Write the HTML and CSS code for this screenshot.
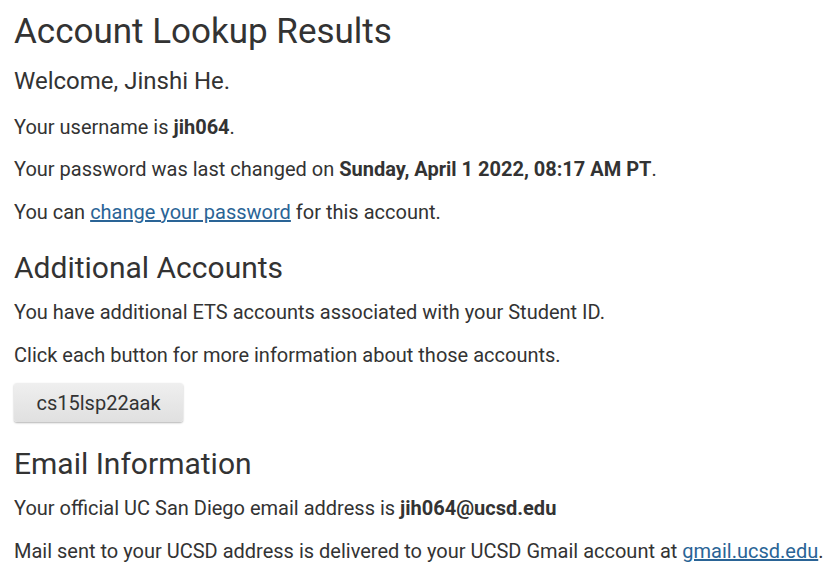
FILE: index.html
```html
<!DOCTYPE html>
<html>
<head>
<meta charset="utf-8">
<link rel="stylesheet" href="styles.css">
</head>
<body>
<div class="page">
  <h1 class="title">Account Lookup Results</h1>
  <p class="welcome">Welcome, Jinshi He.</p>
  <p class="text">Your username is <strong>jih064</strong>.</p>
  <p class="text">Your password was last changed on <strong>Sunday, April 1 2022, 08:17 AM PT</strong>.</p>
  <p class="text">You can <a class="link" href="#">change your password</a> for this account.</p>

  <h2 class="section">Additional Accounts</h2>
  <p class="text">You have additional ETS accounts associated with your Student ID.</p>
  <p class="text">Click each button for more information about those accounts.</p>
  <div class="buttons"><button class="btn">cs15lsp22aak</button></div>

  <h2 class="section">Email Information</h2>
  <p class="text">Your official UC San Diego email address is <strong>jih064@ucsd.edu</strong></p>
  <p class="text">Mail sent to your UCSD address is delivered to your UCSD Gmail account at <a class="link" href="#">gmail.ucsd.edu</a>.</p>
</div>
</body>
</html>
```
FILE: styles.css
```css
html, body {
  margin: 0;
  padding: 0;
  background: #fff;
}
body {
  font-family: Roboto, "Liberation Sans", sans-serif;
  color: #333;
}
.page {
  padding: 10px 14px 0;
}
.title {
  font-size: 35px;
  font-weight: 400;
  line-height: 44px;
  margin: 0 0 10px;
}
.welcome {
  font-size: 24px;
  line-height: 34px;
  margin: 0 0 14.75px;
}
.text {
  font-size: 20px;
  line-height: 28.5px;
  margin: 0 0 14px;
}
.text strong {
  font-weight: 700;
}
.link {
  color: #2a6496;
  text-decoration: underline;
}
.section {
  font-size: 30px;
  font-weight: 400;
  line-height: 40px;
  margin: 22px 0 10px;
}
.buttons {
  margin: 0 0 14px;
}
.btn {
  font-family: Roboto, "Liberation Sans", sans-serif;
  font-size: 20px;
  color: #333;
  padding: 0;
  height: 39px;
  width: 169px;
  border: none;
  border-radius: 3px;
  background: linear-gradient(#efefef, #e0e0e0);
  box-shadow: 0 1px 2px rgba(0,0,0,0.3);
}
```
